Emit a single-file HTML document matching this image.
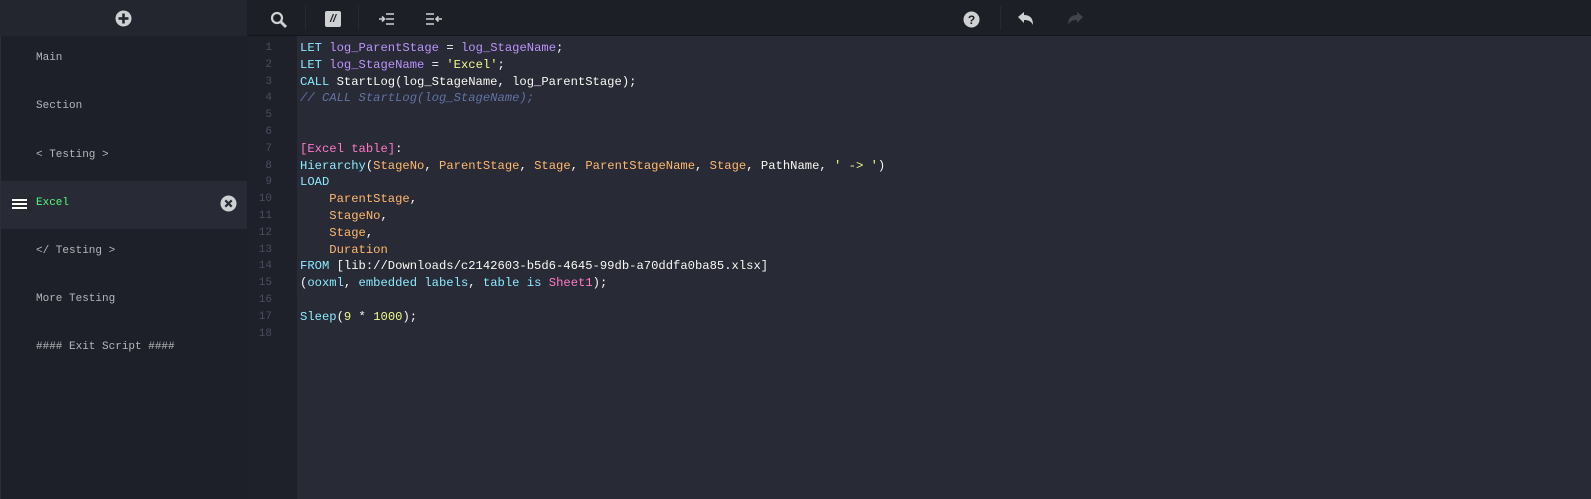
<!DOCTYPE html>
<html><head><meta charset="utf-8"><style>
*{margin:0;padding:0;box-sizing:border-box}
body{width:1591px;height:499px;overflow:hidden;background:#282a36;font-family:"Liberation Mono",monospace;position:relative}
.tb{position:absolute;left:0;top:0;width:1591px;height:36px;background:#1c1f26;border-bottom:1px solid #15171c}
.tbl{position:absolute;left:0;top:0;width:247px;height:36px;background:#23262e}
.side{position:absolute;left:0;top:36px;width:247px;height:463px;background:#1d2028;border-left:1px solid #2c2f38}
.item{position:absolute;left:36px;font-size:11px;color:#b4b6ba}
.act{position:absolute;left:1px;top:181px;width:246px;height:48px;background:#282b35}
.gut{position:absolute;left:247px;top:36px;width:50px;height:463px;background:#1e2129}
.code{position:absolute;left:300px;top:40px;font-size:12.2px;line-height:16.8px;color:#f8f8f2;white-space:pre}
.k{color:#8be9fd}.v{color:#bd93f9}.s{color:#f1fa8c}.f{color:#ffb86c}.c{color:#6272a4;font-style:italic}.p{color:#ff79c6}.n{color:#f1fa8c}
.sep{position:absolute;top:6px;width:1px;height:24px;background:#262930}
</style></head><body>
<div class="tb"></div><div class="tbl"></div>
<svg style="position:absolute;left:115px;top:10px" width="17" height="17" viewBox="0 0 17 17"><circle cx="8.5" cy="8.5" r="8" fill="#cfd0d2"/><rect x="7.2" y="3.5" width="2.6" height="10" fill="#23262e"/><rect x="3.5" y="7.2" width="10" height="2.6" fill="#23262e"/></svg>
<svg style="position:absolute;left:270px;top:11px" width="18" height="18" viewBox="0 0 18 18"><circle cx="7" cy="7" r="5" stroke="#cfd0d2" stroke-width="2.2" fill="none"/><path d="M10.5 10.5L16 16" stroke="#cfd0d2" stroke-width="3"/></svg>
<div class="sep" style="left:305px"></div>
<div style="position:absolute;left:325px;top:11px;width:16px;height:16px;background:#cfd0d2;border-radius:2px;color:#1c1f26;font:bold italic 11px 'Liberation Sans',sans-serif;text-align:center;line-height:16px">//</div>
<div class="sep" style="left:358px"></div>
<svg style="position:absolute;left:379px;top:13px" width="16" height="12" viewBox="0 0 16 12"><path d="M7 1h8M7 6h8M7 11h8M0 6h5M3 3.5l2.5 2.5L3 8.5" stroke="#cfd0d2" stroke-width="1.6" fill="none"/></svg>
<svg style="position:absolute;left:426px;top:13px" width="16" height="12" viewBox="0 0 16 12"><path d="M0 1h8M0 6h8M0 11h8M10 6h6M12.5 3.5L10 6l2.5 2.5" stroke="#cfd0d2" stroke-width="1.6" fill="none"/></svg>
<svg style="position:absolute;left:963px;top:11px" width="17" height="17" viewBox="0 0 17 17"><circle cx="8.5" cy="8.5" r="8" fill="#cfd0d2"/><text x="8.5" y="13" text-anchor="middle" font-size="12" font-weight="bold" font-family="Liberation Sans" fill="#1c1f26">?</text></svg>
<div class="sep" style="left:1000px"></div>
<svg style="position:absolute;left:1018px;top:12px" width="17" height="15" viewBox="0 0 17 15"><path d="M0 5l6-5v3c6 0 9 3 9 10c-2-4-5-5-9-5v3z" fill="#cfd0d2"/></svg>
<svg style="position:absolute;left:1066px;top:12px" width="17" height="15" viewBox="0 0 17 15"><path d="M17 5l-6-5v3c-6 0-9 3-9 10c2-4 5-5 9-5v3z" fill="#41444c"/></svg>
<div class="side"></div>
<div class="act"></div>
<div class="item" style="top:52px">Main</div>
<div class="item" style="top:100px">Section</div>
<div class="item" style="top:149px">&lt; Testing &gt;</div>
<div class="item" style="top:197px;color:#50fa7b">Excel</div>
<div style="position:absolute;left:12px;top:199px;width:15px;height:2px;background:#fff;box-shadow:0 4px 0 #fff,0 8px 0 #fff"></div>
<svg style="position:absolute;left:220px;top:195px" width="17" height="17" viewBox="0 0 17 17"><circle cx="8.5" cy="8.5" r="8" fill="#cfd0d2"/><path d="M5.3 5.3l6.4 6.4M11.7 5.3l-6.4 6.4" stroke="#282b35" stroke-width="2.2"/></svg>
<div class="item" style="top:245px">&lt;/ Testing &gt;</div>
<div class="item" style="top:293px">More Testing</div>
<div class="item" style="top:341px">#### Exit Script ####</div>
<div class="gut"></div>
<div class="code"><span class="k">LET</span> <span class="v">log_ParentStage</span> = <span class="v">log_StageName</span>;
<span class="k">LET</span> <span class="v">log_StageName</span> = <span class="s">'Excel'</span>;
<span class="k">CALL</span> StartLog(log_StageName, log_ParentStage);
<span class="c">// CALL StartLog(log_StageName);</span>


<span class="p">[Excel table]</span>:
<span class="k">Hierarchy</span>(<span class="f">StageNo</span>, <span class="f">ParentStage</span>, <span class="f">Stage</span>, <span class="f">ParentStageName</span>, <span class="f">Stage</span>, PathName, <span class="s">' -&gt; '</span>)
<span class="k">LOAD</span>
    <span class="f">ParentStage</span>,
    <span class="f">StageNo</span>,
    <span class="f">Stage</span>,
    <span class="f">Duration</span>
<span class="k">FROM</span> [lib://Downloads/c2142603-b5d6-4645-99db-a70ddfa0ba85.xlsx]
(<span class="k">ooxml</span>, <span class="k">embedded labels</span>, <span class="k">table is</span> <span class="p">Sheet1</span>);

<span class="k">Sleep</span>(<span class="n">9</span> * <span class="n">1000</span>);
</div>
<div style="position:absolute;left:247px;top:40px;width:25px;font-size:11px;line-height:16.8px;color:#4a4e60;text-align:right;white-space:pre">1
2
3
4
5
6
7
8
9
10
11
12
13
14
15
16
17
18</div>
</body></html>
